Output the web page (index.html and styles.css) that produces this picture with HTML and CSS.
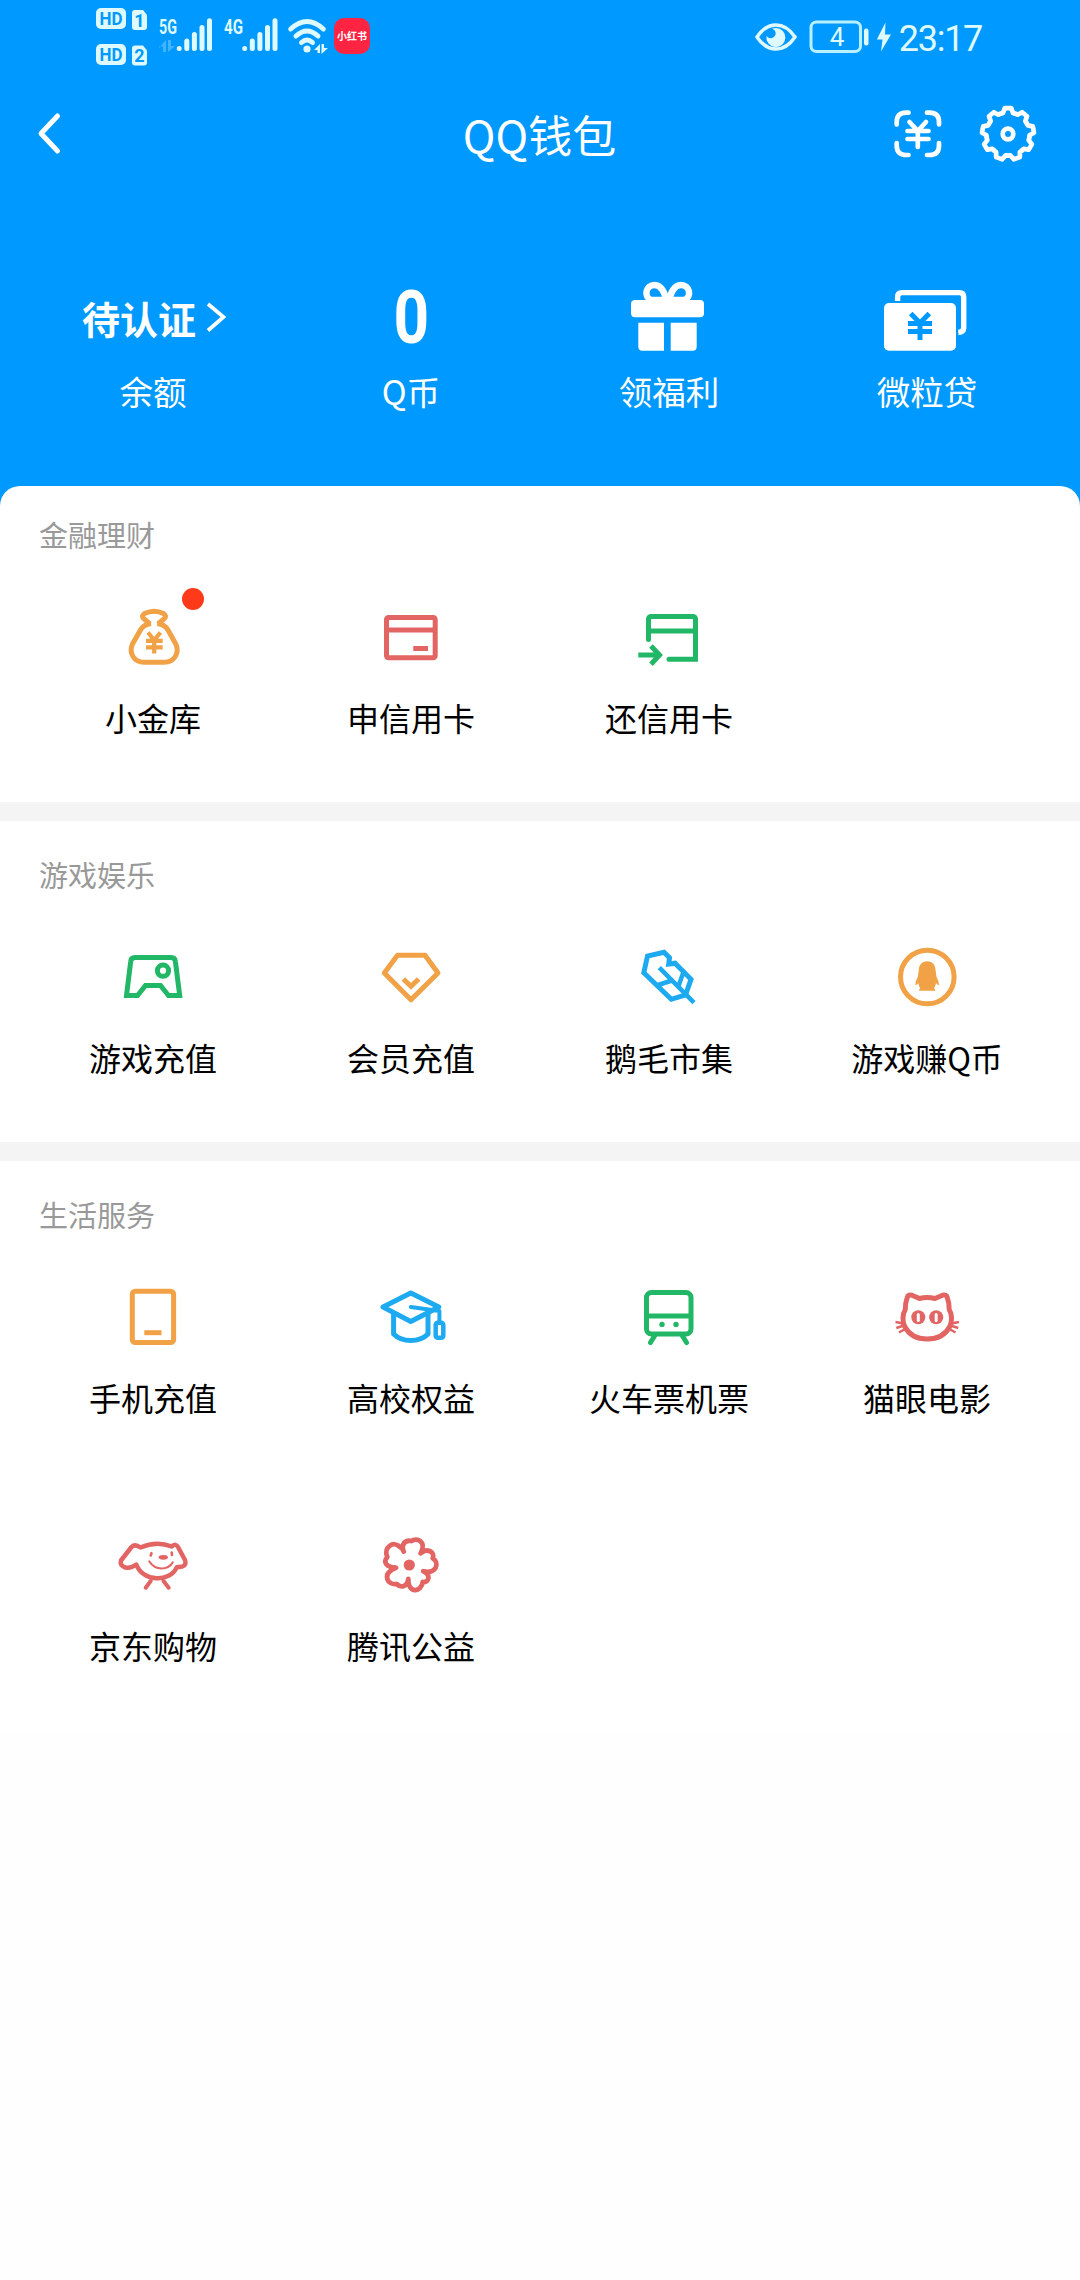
FILE: index.html
```html
<!DOCTYPE html>
<html lang="zh-CN">
<head>
  <meta charset="utf-8" />
  <title>QQ钱包</title>
  <meta name="viewport" content="width=device-width, initial-scale=1.0">
  <link rel="stylesheet" href="styles.css">
</head>
<body>
  <svg width="0" height="0" class="defs">
    <defs>
      <g id="bars">
        <path d="M2.700 30.500v.1M10.300 23v7.500M17.900 16.500v14M25.500 9.500v21M33 2.700v27.800" stroke="#dffaff" stroke-width="5" stroke-linecap="round"/>
      </g>
      <path id="tooth" d="M-7.300 -20.300L-5 -21L-3.200 -25.800H3.200L5 -21L7.300 -20.300"/>
      <path id="updown" d="M0 8L7 0V12H4V6.500H0ZM9 0H12V6H16L9 12Z"/>
    </defs>
  </svg>

  <div class="header">
    <div class="status-bar">
      <div class="status-left">
        <svg class="sim" width="52" height="60" viewBox="0 0 52 60">
          <g fill="#dffaff">
            <rect x="0" y="2" width="30" height="21" rx="5"/>
            <rect x="0" y="38" width="30" height="21" rx="5"/>
            <path d="M39 4H47L51 9V21Q51 24 48 24H39Q36 24 36 21V7Q36 4 39 4Z"/>
            <path d="M39 39.500H47L51 44.500V56.500Q51 59.500 48 59.500H39Q36 59.500 36 56.500V42.500Q36 39.500 39 39.500Z"/>
          </g>
          <g class="sim-text">
            <text x="15" y="19" textLength="23" lengthAdjust="spacingAndGlyphs">HD</text>
            <text x="15" y="55" textLength="23" lengthAdjust="spacingAndGlyphs">HD</text>
            <text x="43.500" y="20.500">1</text>
            <text x="43.500" y="56">2</text>
          </g>
        </svg>
        <svg class="net net-5g" width="54" height="44" viewBox="0 -4 54 44">
          <text x="0" y="16" textLength="18" lengthAdjust="spacingAndGlyphs">5G</text>
          <use href="#updown" x="0" y="22" fill="#dffaff" opacity=".3"/>
          <use href="#bars" x="17.500" y="0"/>
        </svg>
        <svg class="net net-4g" width="54" height="44" viewBox="0 -4 54 44">
          <text x="0" y="16" textLength="19" lengthAdjust="spacingAndGlyphs">4G</text>
          <use href="#bars" x="18" y="0"/>
        </svg>
        <svg class="wifi" width="40" height="36" viewBox="0 0 40 36">
          <g fill="none" stroke="#dffaff" stroke-width="5" stroke-linecap="round">
            <path d="M2.700 11Q19 -4 35.300 11"/>
            <path d="M8 18Q19 8 30 18"/>
            <path d="M13.500 24.500Q19 19.500 24.500 24.500"/>
          </g>
          <circle cx="19" cy="31" r="3.600" fill="#dffaff"/>
          <path d="M26 32L32 26V35H29.500V32ZM33.500 26H36V30H40L33.500 36Z" fill="#dffaff"/>
        </svg>
        <span class="app-badge">小红书</span>
      </div>
      <div class="status-right">
        <svg width="42" height="28" viewBox="0 0 42 28">
          <path d="M2 14Q10 2 21 2T40 14Q32 26 21 26T2 14Z" fill="none" stroke="#dffaff" stroke-width="3.500"/>
          <path d="M21 5A9.500 9.500 0 1 1 11.500 13Q14 16 17 15Q21.500 13 20.500 9Q20 6.500 17 5.500Q19 5 21 5Z" fill="#dffaff"/>
        </svg>
        <svg class="battery" width="60" height="34" viewBox="0 0 60 34">
          <rect x="2" y="2" width="49.500" height="29.500" rx="5.500" fill="none" stroke="#b8f0ff" stroke-width="3"/>
          <rect x="55" y="8.500" width="4.500" height="17" rx="2" fill="#dffaff"/>
          <text x="28" y="26">4</text>
        </svg>
        <svg class="bolt" width="16" height="30" viewBox="0 0 16 30">
          <path d="M9.500 .5L.8 17.500H6.500L5 29.500L15 12.500H9Z" fill="#dffaff"/>
        </svg>
        <span class="time">23:17</span>
      </div>
    </div>

    <div class="nav-bar">
      <svg class="back" width="28" height="48" viewBox="0 0 28 48">
        <path d="M22.500 6L6 23.500L22.500 41" fill="none" stroke="#fff" stroke-width="5" stroke-linecap="round" stroke-linejoin="round"/>
      </svg>
      <h1>QQ钱包</h1>
      <div class="nav-actions">
        <svg width="48" height="48" viewBox="0 0 48 48" fill="none" stroke="#fff" stroke-width="4.700" stroke-linecap="round">
          <path d="M2.700 14.500V12Q2.700 2.700 12 2.700H14.500M33 2.700H35.500Q45 2.700 45 12V14.500M45 33V35.500Q45 45 35.500 45H33M14.500 45H12Q2.700 45 2.700 35.500V33"/>
          <path d="M15.500 12L23.800 21L32 12M13.500 21H34.500M13.500 29H34.500M23.800 21V37"/>
        </svg>
        <svg width="60" height="60" viewBox="-30 -30 60 60" fill="none" stroke="#fff" stroke-width="4.700" stroke-linecap="round" stroke-linejoin="round">
          <use href="#tooth"/>
          <use href="#tooth" transform="rotate(40)"/>
          <use href="#tooth" transform="rotate(80)"/>
          <use href="#tooth" transform="rotate(120)"/>
          <use href="#tooth" transform="rotate(160)"/>
          <use href="#tooth" transform="rotate(200)"/>
          <use href="#tooth" transform="rotate(240)"/>
          <use href="#tooth" transform="rotate(280)"/>
          <use href="#tooth" transform="rotate(320)"/>
          <circle r="5.300"/>
        </svg>
      </div>
    </div>

    <div class="stats">
      <div class="stat">
        <div class="stat-value verify">待认证
          <svg width="22" height="32" viewBox="0 0 22 32">
            <path d="M3 3L18.500 16L3 29.500" fill="none" stroke="#fff" stroke-width="3.700"/>
          </svg>
        </div>
        <div class="stat-label">余额</div>
      </div>
      <div class="stat">
        <div class="stat-value"><span class="number">0</span></div>
        <div class="stat-label">Q币</div>
      </div>
      <div class="stat">
        <div class="stat-value">
          <svg width="84" height="72" viewBox="0 0 84 72">
            <g fill="none" stroke="#fff" stroke-width="6.500" stroke-linejoin="round">
              <path d="M38.500 19H24C16.500 16 18.500 4 27.500 4C34 4 38.500 12 38.500 19Z"/>
              <path d="M43 19H57.500C65 16 63 4 54 4C47.500 4 43 12 43 19Z"/>
            </g>
            <rect x="4" y="19" width="73" height="17.300" rx="4" fill="#fff"/>
            <path d="M11.300 41.700H37V69.700H15.300Q11.300 69.700 11.300 65.700ZM43.700 41.700H69.700V65.700Q69.700 69.700 65.700 69.700H43.700Z" fill="#fff"/>
          </svg>
        </div>
        <div class="stat-label">领福利</div>
      </div>
      <div class="stat">
        <div class="stat-value">
          <svg width="90" height="72" viewBox="0 0 90 72">
            <path d="M15.600 20V16Q15.600 11.600 20 11.600H77.500Q81.700 11.600 81.700 16V47Q81.700 51 76.300 51.500" fill="none" stroke="#fff" stroke-width="5.400"/>
            <rect x="2" y="22" width="72" height="47.700" rx="5" fill="#fff"/>
            <path d="M28.700 32.500L38 42L47.300 32.500M26 42.500H50M26 50.500H50M38 42V59" fill="none" stroke="#0099ff" stroke-width="5"/>
          </svg>
        </div>
        <div class="stat-label">微粒贷</div>
      </div>
    </div>
  </div>

  <div class="section first">
    <h2>金融理财</h2>
    <div class="grid">
      <div class="item">
        <svg class="icon orange" viewBox="0 0 72 72">
          <path d="M33 22L26.500 16.500Q24 14 27.500 11.500Q37 7 46.500 11.500Q50 14 47.500 16.500L41 22"/>
          <path d="M34 21.500Q26.500 22.500 23.500 28L15.500 42C11.500 51 17 60.200 27 60.200H47.300C57.300 60.200 62.800 51 58.800 42L51 28Q48 22.500 40.300 21.500"/>
          <path d="M31 30.500L37.200 38L43.500 30.500M29 38.800H45.700M29 45.300H45.700M37.200 38V51.500" stroke-width="4.200"/>
        </svg>
        <span class="dot"></span>
        <span>小金库</span>
      </div>
      <div class="item">
        <svg class="icon red" viewBox="0 0 72 72">
          <rect x="11.500" y="15.500" width="48.700" height="40.300" rx="2"/>
          <path d="M11 28H60M38.300 46.500H53"/>
        </svg>
        <span>申信用卡</span>
      </div>
      <div class="item">
        <svg class="icon green" viewBox="0 0 72 72">
          <path d="M15.500 37.500V17.500Q15.500 14.500 18.500 14.500H59.500Q62.500 14.500 62.500 17.500V57.300H36" stroke-linecap="round"/>
          <path d="M15.500 29H62.500M5.300 53H27M18 44L26.500 53L18 62.300"/>
        </svg>
        <span>还信用卡</span>
      </div>
    </div>
  </div>

  <div class="section">
    <h2>游戏娱乐</h2>
    <div class="grid">
      <div class="item">
        <svg class="icon green" viewBox="0 0 72 72">
          <path d="M9.500 53.500L13.700 19.500Q14 15.500 18 15.500H54Q58 15.500 58.400 19.500L62.700 53.500H51.500L43.500 43.500H28.500L20.500 53.500Z"/>
          <circle cx="46" cy="28.700" r="5.600"/>
        </svg>
        <span>游戏充值</span>
      </div>
      <div class="item">
        <svg class="icon orange" viewBox="0 0 72 72" stroke-linejoin="round">
          <path d="M22.500 13.200H50L63 31L36 57.800L9.300 31Z"/>
          <path d="M28.300 37L36 44.300L43.700 37" stroke-linejoin="miter"/>
        </svg>
        <span>会员充值</span>
      </div>
      <div class="item">
        <svg class="icon blue" viewBox="0 0 72 72">
          <path d="M10.800 30.700L14.500 14L31 10.200L36.500 15.700L35.700 22L42 21.200L58 37.300L52.500 53L38.300 57.300Z"/>
          <path d="M26.300 25.700L61 60.700M25 43L39 38.500M50.500 30L45.500 44" stroke-width="4.500"/>
        </svg>
        <span>鹅毛市集</span>
      </div>
      <div class="item">
        <svg class="icon orange" viewBox="0 0 72 72">
          <circle cx="36.300" cy="35" r="26.800"/>
          <path class="solid" d="M36.200 19.300C41.500 19.300 44.300 23 44.500 28Q45 31 45.500 35Q48 39 48 43Q46.500 43.500 45 41Q44.500 44.500 43 46.500Q44.500 47.200 44.300 48.700H28Q27.800 47.200 29.300 46.500Q27.800 44.500 27.300 41Q25.800 43.500 24.300 43Q24.300 39 26.800 35Q27.300 31 27.800 28C28 23 31 19.300 36.200 19.300Z"/>
        </svg>
        <span>游戏赚Q币</span>
      </div>
    </div>
  </div>

  <div class="section">
    <h2>生活服务</h2>
    <div class="grid">
      <div class="item">
        <svg class="icon orange" viewBox="0 0 72 72">
          <rect x="15.300" y="9.200" width="41.300" height="51.300" rx="3"/>
          <path d="M27.300 50.700H44.500"/>
        </svg>
        <span>手机充值</span>
      </div>
      <div class="item">
        <svg class="icon blue" viewBox="0 0 72 72" stroke-linejoin="round" stroke-linecap="round">
          <path d="M8 25L35.800 11L63.800 25L35.800 39.500Z"/>
          <path d="M18.600 32V52Q25 58.500 35.800 58.500T53 52V32" stroke-linecap="butt"/>
          <path d="M35.800 25L64.400 29V40" stroke-width="4"/>
          <rect x="60.700" y="40.700" width="7.600" height="15" rx="2" stroke-width="4.500"/>
        </svg>
        <span>高校权益</span>
      </div>
      <div class="item">
        <svg class="icon green" viewBox="0 0 72 72">
          <rect x="13.500" y="10.500" width="44.500" height="41.500" rx="5"/>
          <path d="M13.500 34H58"/>
          <path d="M21.500 54L17.500 60.500M49.500 54L53.500 60.500" stroke-linecap="round"/>
          <circle class="solid" cx="29" cy="42.400" r="2.700"/>
          <circle class="solid" cx="43" cy="42.400" r="2.700"/>
        </svg>
        <span>火车票机票</span>
      </div>
      <div class="item">
        <svg class="icon red" viewBox="0 0 72 72" stroke-linejoin="round">
          <path d="M28.500 16.500Q36 14.700 44 16.500L51.500 13.200Q55.500 12 56.300 15.500Q58.500 22 58.200 27.500C61 32 61.500 40 58.500 45C54 53.500 45 57 36.200 57S18.500 53.500 14 45C11 40 11.500 32 14.300 27.500Q14 22 16.200 15.500Q17 12 21 13.200Z"/>
          <path d="M4.500 40L12.500 41.500M5.300 46L13 43.500M8 50.500L15 46.500M68 40L60 41.500M67.200 46L59.500 43.500M64.500 50.500L57.500 46.500" stroke-width="2.500"/>
          <circle class="solid" cx="27.300" cy="35.300" r="7"/>
          <circle class="solid" cx="45.200" cy="35.300" r="7"/>
          <rect class="pupil" x="25.800" y="31" width="3" height="9" rx="1.500"/>
          <rect class="pupil" x="43.700" y="31" width="3" height="9" rx="1.500"/>
        </svg>
        <span>猫眼电影</span>
      </div>
      <div class="item">
        <svg class="icon red" viewBox="0 0 72 72" stroke-linecap="round" stroke-linejoin="round">
          <path d="M23.500 17.500Q39.500 10.500 54.700 16.500Q59 13 61 17L68 30Q69.800 35 65.500 36.500L59.700 37.300C53 52.500 26 52.500 19.300 34.500Q14 38.500 8.500 37.500Q2.500 35.500 4 30.500L14.500 17Q18 13.500 23.500 17.500Z" stroke-width="4.500"/>
          <path d="M33.700 51L28.700 57.700M46.500 51L51.700 57.700" stroke-width="4"/>
          <path d="M32.300 31.500Q37 38.500 44.500 38.500T55.700 32.500" stroke-width="2.200"/>
          <path d="M34.500 23.200L33.700 25.500M54.700 22.500L55 25" stroke-width="2.600"/>
          <ellipse class="solid" cx="46.300" cy="27.300" rx="4.600" ry="2.400"/>
        </svg>
        <span>京东购物</span>
      </div>
      <div class="item">
        <svg class="icon red" viewBox="0 0 72 72" stroke-linejoin="round">
          <path d="M28.700 21.500C26 15 29.500 9.500 36.500 11C41.500 7.500 52 11 45.700 23.300C52 17.500 60.500 22 57.700 28.300C65 33 61.500 44 48.300 41.300C56 44.500 54.500 52.500 47.700 52C46.500 62.500 33 64 33.300 49C32.500 56.500 26 58.500 21.700 54C12.500 55.500 6 44 21 37.700C11 37.500 8 32 12.300 27C8 17.500 18.500 10 25 17Q27.500 18 28.700 21.500Z" stroke-width="4.800"/>
          <circle class="solid" cx="34.300" cy="35" r="5.600"/>
        </svg>
        <span>腾讯公益</span>
      </div>
    </div>
  </div>
</body>
</html>
```
FILE: styles.css
```css
* {
  box-sizing: border-box;
}
body {
  margin: 0;
  min-height: 2280px;
  background: #fefefe;
  font-family: "Noto Sans CJK SC", sans-serif;
  color: #000;
}
svg {
  display: block;
  flex: none;
  overflow: visible;
}
.defs {
  position: absolute;
}
h1, h2 {
  margin: 0;
  font-weight: normal;
}

/* header */
.header {
  height: 506px;
  background: #0099ff;
  color: #fff;
}
.status-bar {
  height: 75px;
  display: flex;
  justify-content: space-between;
  padding: 0 98px 0 96px;
}
.status-left, .status-right {
  display: flex;
  align-items: center;
}
.status-left {
  height: 72px;
}
.status-right {
  height: 73px;
}
.sim-text {
  font-family: Roboto, sans-serif;
  font-size: 18px;
  font-weight: bold;
  text-anchor: middle;
  fill: #0099ff;
}
.net text {
  font-family: Roboto, sans-serif;
  font-size: 20px;
  font-weight: bold;
  fill: #dffaff;
}
.net-5g {
  margin-left: 11px;
}
.net-4g {
  margin-left: 11px;
}
.wifi {
  margin-left: 10px;
}
.app-badge {
  width: 36px;
  height: 36px;
  margin-left: 6px;
  border-radius: 10px;
  background: #ff2442;
  font-size: 10px;
  font-weight: bold;
  line-height: 36px;
  text-align: center;
  white-space: nowrap;
}
.battery {
  margin-left: 12px;
}
.battery text {
  font-family: Roboto, sans-serif;
  font-size: 26px;
  text-anchor: middle;
  fill: #dffaff;
}
.bolt {
  margin-left: 7px;
}
.time {
  margin-left: 7px;
  margin-top: 4px;
  font-family: Roboto, sans-serif;
  font-size: 36px;
  letter-spacing: -1.300px;
  color: #dffaff;
}
.nav-bar {
  height: 117px;
  display: grid;
  grid-template-columns: 1fr auto 1fr;
  align-items: center;
  padding: 0 42px 0 35px;
}
.nav-bar h1 {
  padding-left: 6px;
  font-size: 44px;
  line-height: 60px;
}
.nav-actions {
  display: flex;
  justify-content: flex-end;
  align-items: center;
  gap: 36px;
}
.stats {
  display: grid;
  grid-template-columns: repeat(4, 258px);
  padding: 89px 24px 0;
}
.stat {
  display: flex;
  flex-direction: column;
  align-items: center;
}
.stat-value {
  height: 72px;
  display: flex;
  align-items: center;
}
.verify {
  gap: 9px;
  padding-left: 3px;
  font-size: 38px;
  font-weight: bold;
}
.number {
  padding-top: 2px;
  font-family: Roboto, sans-serif;
  font-size: 74px;
  font-weight: bold;
  line-height: 72px;
  transform: scaleX(.84);
}
.stat-label {
  margin-top: 18px;
  font-size: 33.5px;
  line-height: 40px;
}

/* sections */
.section {
  padding: 33px 24px 65px;
  background: #fff;
  border-bottom: 19px solid #f4f4f4;
}
.section:last-child {
  border-bottom: 0;
}
.section.first {
  margin-top: -20px;
  padding-top: 28px;
  border-radius: 20px 20px 0 0;
}
.section h2 {
  padding-left: 15px;
  font-size: 29px;
  line-height: 40px;
  color: #999;
}
.grid {
  display: grid;
  grid-template-columns: repeat(4, 258px);
  row-gap: 113px;
  margin-top: 48px;
}
.item {
  position: relative;
  display: flex;
  flex-direction: column;
  align-items: center;
  gap: 23px;
  font-size: 32px;
  line-height: 40px;
}
.icon {
  width: 72px;
  height: 72px;
  fill: none;
  stroke: currentColor;
  stroke-width: 5;
}
.orange {
  color: #f1a146;
}
.red {
  color: #e26463;
}
.green {
  color: #21b766;
}
.blue {
  color: #1eaaf0;
}
.icon .solid {
  fill: currentColor;
  stroke: none;
}
.icon .pupil {
  fill: #fff;
  stroke: none;
}
.dot {
  position: absolute;
  top: -14px;
  left: 158px;
  width: 22px;
  height: 22px;
  border-radius: 50%;
  background: #ff3a1a;
}
```
